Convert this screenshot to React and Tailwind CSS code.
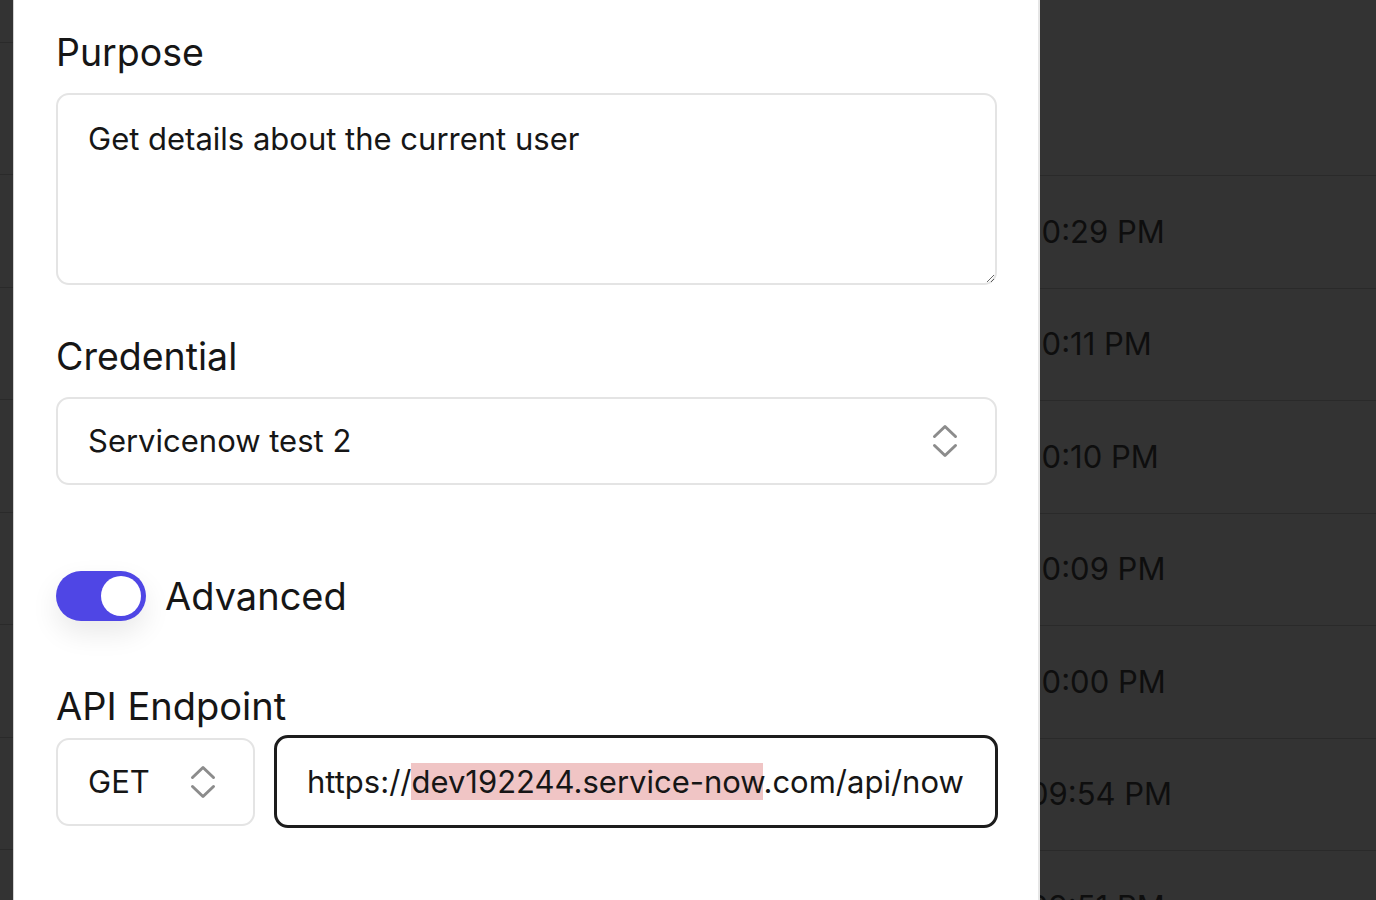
const TIMES = ['10:29 PM', '10:11 PM', '10:10 PM', '10:09 PM', '10:00 PM', '09:54 PM', '09:51 PM']

function UpDown() {
  return (
    <svg width="26" height="34" viewBox="0 0 26 34" fill="none" stroke="#8c8c8c" strokeWidth="3" strokeLinecap="round" strokeLinejoin="round">
      <path d="M2.5 12.5 13 2.5l10.5 10" />
      <path d="M2.5 21.5 13 31.5l10.5-10" />
    </svg>
  )
}

function SelectBox({ value, className }) {
  return (
    <div className={`flex h-[88px] items-center justify-between rounded-[13px] border-2 border-[#e4e4e4] bg-white pl-[30px] pr-[37px] ${className}`}>
      <span className="text-[31px] leading-[40px] text-[#161616]">{value}</span>
      <UpDown />
    </div>
  )
}

export default function App() {
  return (
    <div className="flex h-screen w-full overflow-hidden bg-[#333333] font-[Inter,sans-serif]">
      {/* page edge behind the drawer */}
      <div className="flex w-[13px] shrink-0 flex-col">
        <div className="h-[43px] shrink-0 border-b border-[#2a2a2a]" />
        <div className="h-[132px] shrink-0 border-b border-[#2a2a2a]" />
        {TIMES.map((t) => (
          <div key={t} className="h-[112.5px] shrink-0 border-b border-[#2a2a2a]" />
        ))}
      </div>

      {/* drawer */}
      <div className="w-[1027px] shrink-0 border-l border-r-2 border-l-[#d2d2d2] border-r-[#e6e6e6] bg-white pl-[42px] pr-[41px] pt-[30px] text-[#161616]">
        <div className="text-[37.5px] leading-[46px]">Purpose</div>
        <textarea
          readOnly
          defaultValue="Get details about the current user"
          className="mt-[17px] block h-[192px] w-full rounded-[13px] border-2 border-[#e4e4e4] px-[30px] pt-[24px] text-[31px] leading-[40px] text-[#161616] outline-none"
        />

        <div className="mt-[49px] text-[37.5px] leading-[46px]">Credential</div>
        <SelectBox value="Servicenow test 2" className="mt-[17px] w-full" />

        <div className="mt-[86px] flex items-center gap-[19px]">
          <div className="flex h-[50px] w-[90px] items-center justify-end rounded-full bg-[#4f46e5] pr-[5px] shadow-[0_12px_28px_rgba(0,0,0,0.09)]">
            <div className="h-[40px] w-[40px] rounded-full bg-white" />
          </div>
          <span className="text-[38px] leading-[46px]">Advanced</span>
        </div>

        <div className="mt-[62px] text-[38px] leading-[46px]">API Endpoint</div>
        <div className="mt-[6px] flex items-center gap-[19px]">
          <SelectBox value="GET" className="w-[199px] shrink-0" />
          <div className="-mr-[1px] flex h-[93px] min-w-0 flex-1 items-center rounded-[14px] border-[3px] border-[#1c1c1c] px-[30px]">
            <div className="min-w-0 overflow-hidden whitespace-nowrap text-[31px] leading-[38px] text-[#161616]">
              https://<span className="bg-[#f0c5c5]">dev192244.service-now</span>.com/api/now
            </div>
          </div>
        </div>
      </div>

      {/* table rows behind the overlay */}
      <div className="flex min-w-0 flex-1 flex-col overflow-hidden">
        <div className="h-[176px] shrink-0 border-b border-[#2a2a2a]" />
        {TIMES.map((t) => (
          <div key={t} className="flex h-[112.5px] shrink-0 items-center border-b border-[#2a2a2a]">
            <span className="-ml-[11px] whitespace-nowrap text-[31px] leading-[40px] text-[#0e0e0e]">{t}</span>
          </div>
        ))}
      </div>
    </div>
  )
}
